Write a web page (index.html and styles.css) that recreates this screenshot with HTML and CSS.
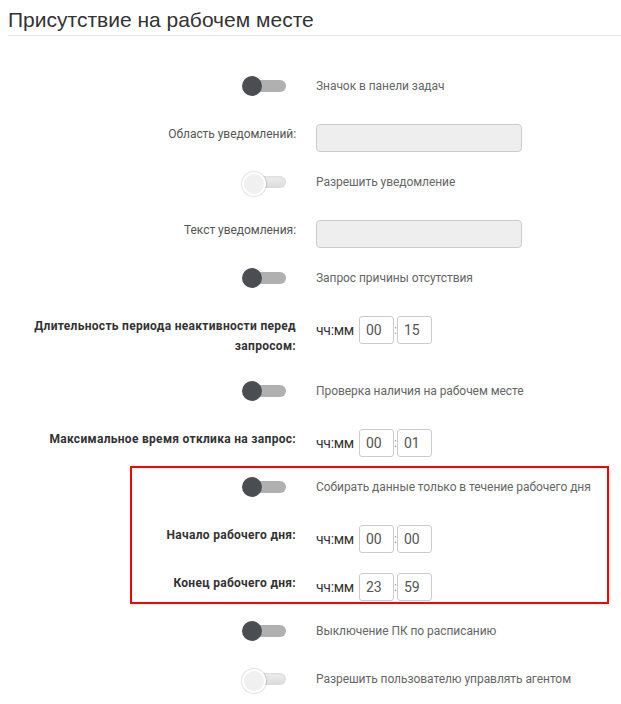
FILE: index.html
```html
<html>

	<head>
		<meta charset="utf-8">
		<title>Присутствие на рабочем месте</title>
		<link rel="stylesheet" href="styles.css">
	</head>

	<body>
		<div class="page">
			<h2 class="legend">Присутствие на рабочем месте</h2>

			<div class="form">
				<div class="row">
					<div class="label"><span class="switch"></span></div>
					<div class="ctrl"><span class="hint">Значок в панели задач</span></div>
				</div>
				<div class="row">
					<label class="label">Область уведомлений:</label>
					<div class="ctrl"><input type="text" class="field" disabled /></div>
				</div>
				<div class="row">
					<div class="label"><span class="switch off"></span></div>
					<div class="ctrl"><span class="hint">Разрешить уведомление</span></div>
				</div>
				<div class="row">
					<label class="label">Текст уведомления:</label>
					<div class="ctrl"><input type="text" class="field" disabled /></div>
				</div>
				<div class="row">
					<div class="label"><span class="switch"></span></div>
					<div class="ctrl"><span class="hint">Запрос причины отсутствия</span></div>
				</div>
				<div class="row">
					<label class="label strong">Длительность периода неактивности перед запросом:</label>
					<div class="ctrl time">
						<span class="unit">чч:мм</span>
						<input type="text" class="num" value="00" /><span class="sep">:</span><input type="text" class="num" value="15" />
					</div>
				</div>
				<div class="row">
					<div class="label"><span class="switch"></span></div>
					<div class="ctrl"><span class="hint">Проверка наличия на рабочем месте</span></div>
				</div>
				<div class="row">
					<label class="label strong">Максимальное время отклика на запрос:</label>
					<div class="ctrl time">
						<span class="unit">чч:мм</span>
						<input type="text" class="num" value="00" /><span class="sep">:</span><input type="text" class="num" value="01" />
					</div>
				</div>

				<div class="group">
					<div class="row">
						<div class="label"><span class="switch"></span></div>
						<div class="ctrl"><span class="hint">Собирать данные только в течение рабочего дня</span></div>
					</div>
					<div class="row">
						<label class="label strong">Начало рабочего дня:</label>
						<div class="ctrl time">
							<span class="unit">чч:мм</span>
							<input type="text" class="num" value="00" /><span class="sep">:</span><input type="text" class="num" value="00" />
						</div>
					</div>
					<div class="row">
						<label class="label strong">Конец рабочего дня:</label>
						<div class="ctrl time">
							<span class="unit">чч:мм</span>
							<input type="text" class="num" value="23" /><span class="sep">:</span><input type="text" class="num" value="59" />
						</div>
					</div>
				</div>

				<div class="row">
					<div class="label"><span class="switch"></span></div>
					<div class="ctrl"><span class="hint">Выключение ПК по расписанию</span></div>
				</div>
				<div class="row">
					<div class="label"><span class="switch off"></span></div>
					<div class="ctrl"><span class="hint">Разрешить пользователю управлять агентом</span></div>
				</div>
			</div>
		</div>
	</body>

</html>
```

FILE: styles.css
```css
* {
	margin: 0;
	padding: 0;
	box-sizing: border-box;
}

body {
	font-family: Roboto, "Liberation Sans", sans-serif;
	font-size: 12px;
	color: #555;
	background: #fff;
}

.page {
	padding: 5px 0 0 8px;
}

.legend {
	font-family: "Liberation Sans", Arial, sans-serif;
	font-size: 21px;
	font-weight: normal;
	line-height: 30px;
	color: #333;
	border-bottom: 1px solid #e5e5e5;
	margin-bottom: 40px;
}

.row {
	display: grid;
	grid-template-columns: 273px 1fr;
	column-gap: 20px;
	min-height: 28px;
	margin-bottom: 20px;
	padding-left: 15px;
}

.label {
	display: flex;
	justify-content: flex-end;
	align-items: flex-start;
	text-align: right;
	line-height: 20px;
	margin-bottom: 5px;
	letter-spacing: -0.05px;
}

.strong {
	font-weight: bold;
	color: #333;
	letter-spacing: 0.3px;
}

.hint {
	line-height: 20px;
	color: #666;
	letter-spacing: -0.06px;
}

/* switch: track with the knob drawn over it */
.switch {
	position: relative;
	display: inline-block;
	width: 40px;
	height: 12px;
	margin: 4px 10px 0 0;
	border-radius: 6px;
	background: #b0b0b0;
}

.switch::before {
	content: "";
	position: absolute;
	left: -4px;
	top: -4px;
	width: 20px;
	height: 20px;
	border-radius: 50%;
	background: #4a4e52;
}

.switch.off {
	background: linear-gradient(#eeeeee, #dadada);
	box-shadow: inset 0 1px 2px rgba(0, 0, 0, .08);
}

.switch.off::before {
	background: #f0f0f0;
	border: 2px solid #fff;
	box-shadow: 0 0 1px 1px rgba(0, 0, 0, .12);
}

.field {
	display: block;
	width: 206px;
	height: 28px;
	border: 1px solid #ccc;
	border-radius: 4px;
	background: #eee;
}

.time {
	display: flex;
	align-items: center;
	height: 28px;
	font-size: 14px;
}

.unit {
	color: #333;
	margin-right: 5px;
	letter-spacing: -0.3px;
}

.num {
	width: 35px;
	height: 28px;
	padding: 0 6px;
	border: 1px solid #ccc;
	border-radius: 3px;
	font-family: Roboto, "Liberation Sans", sans-serif;
	font-size: 14px;
	color: #555;
	background: #fff;
}

.sep {
	width: 3px;
	font-size: 12px;
	color: #999;
	text-align: center;
}

/* highlighted block */
.group {
	position: relative;
	margin-bottom: 20px;
}

.group .row:last-child {
	margin-bottom: 0;
}

.group::after {
	content: "";
	position: absolute;
	top: -11px;
	bottom: -3px;
	left: 122px;
	right: 12px;
	border: 2px solid #f00;
	pointer-events: none;
}
```
